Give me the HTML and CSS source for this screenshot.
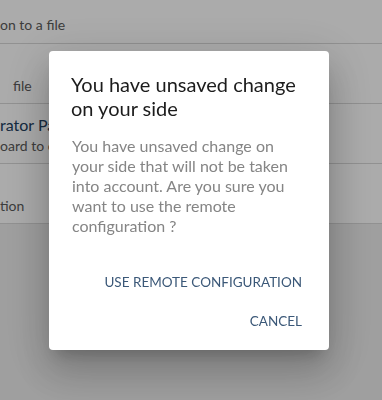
FILE: index.html
```html
<!DOCTYPE html>
<html lang="en">
<head>
  <meta charset="UTF-8">
  <title>Settings - Remote configuration</title>
  <link rel="stylesheet" href="styles.css">
</head>
<body>
  <div class="page">
    <div class="list">
      <div class="row">
        <div class="row-title">&nbsp;</div>
        <div class="row-sub">on to a file</div>
      </div>
      <div class="row">
        <div class="row-title">&nbsp;</div>
        <div class="row-sub indent">file</div>
      </div>
      <div class="row">
        <div class="row-title accent">rator Panel</div>
        <div class="row-sub">oard to configure</div>
      </div>
      <div class="row">
        <div class="row-title">&nbsp;</div>
        <div class="row-sub">tion</div>
      </div>
    </div>
    <div class="footer"></div>
  </div>

  <div class="overlay">
    <div class="dialog">
      <h2 class="dialog-title">You have unsaved change on your side</h2>
      <p class="dialog-text">You have unsaved change on your side that will not be taken into account. Are you sure you want to use the remote configuration ?</p>
      <div class="dialog-actions">
        <button class="btn">Use remote configuration</button>
        <button class="btn">Cancel</button>
      </div>
    </div>
  </div>
</body>
</html>
```

FILE: styles.css
```css
body {
  margin: 0;
  font-family: Lato, "Noto Sans", sans-serif;
  background: #fff;
  overflow: hidden;
}

.page {
  height: 400px;
  display: flex;
  flex-direction: column;
}

.list {
  margin-top: -17px;
}

.row {
  height: 60px;
  padding: 10px 0 0 0;
  box-sizing: border-box;
  border-bottom: 1px solid #d8d8d8;
  font-size: 14px;
  line-height: 21px;
  white-space: nowrap;
}

.row:first-child {
  height: 61px;
}

.row-title {
  font-size: 16px;
  color: #444;
}

.row-title.accent {
  color: #22405f;
}

.row-sub {
  color: #5a5a5a;
}

.row-sub.indent {
  padding-left: 13px;
}

.footer {
  flex: 1;
  background: #ededed;
}

.overlay {
  position: fixed;
  inset: 0;
  background: rgba(0, 0, 0, 0.33);
  display: flex;
  align-items: center;
  justify-content: center;
  padding-right: 4px;
}

.dialog {
  width: 280px;
  background: #fff;
  border-radius: 4px;
  box-sizing: border-box;
  padding-top: 21px;
  box-shadow: 0 11px 15px -7px rgba(0,0,0,0.2), 0 24px 38px 3px rgba(0,0,0,0.14), 0 9px 46px 8px rgba(0,0,0,0.12);
}

.dialog-title {
  margin: 0 22px 16px;
  font-size: 20px;
  font-weight: normal;
  line-height: 24px;
  color: #1c1c1c;
}

.dialog-text {
  margin: 0 36px 20px 23px;
  font-size: 16px;
  line-height: 20px;
  color: #858585;
}

.dialog-actions {
  display: flex;
  flex-direction: column;
  align-items: flex-end;
  gap: 3px;
  padding: 8px 19px 11px;
}

.btn {
  height: 36px;
  padding: 0 8px;
  border: none;
  background: none;
  font-family: inherit;
  font-size: 13.5px;
  text-transform: uppercase;
  color: #3b5878;
  cursor: pointer;
}
```
